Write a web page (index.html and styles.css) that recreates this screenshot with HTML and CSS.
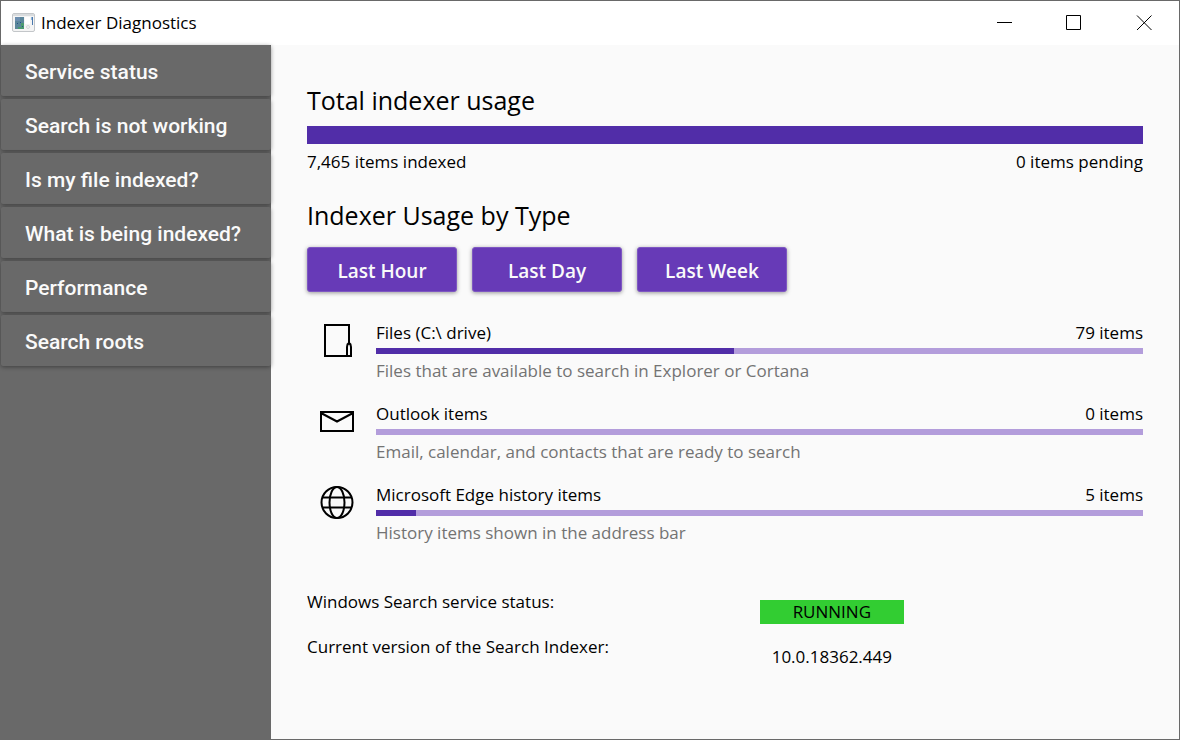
FILE: index.html
```html
<!DOCTYPE html>
<html lang="en">
<head>
    <meta charset="UTF-8">
    <meta name="viewport" content="width=device-width, initial-scale=1.0">
    <title>Indexer Diagnostics</title>
    <link rel="stylesheet" href="styles.css">
</head>
<body>
    <div class="window">
        <header class="title-bar">
            <svg class="app-icon" width="24" height="20" viewBox="0 0 24 20">
                <rect x="0.5" y="0.5" width="22" height="18" rx="1.5" fill="#f4f4f4" stroke="#c3c6c9"/>
                <rect x="1" y="1" width="21" height="2" fill="#d9dcde"/>
                <rect x="3" y="4" width="9" height="12" fill="#5b869b"/>
                <path d="M3 4h5v4H3z" fill="#6d8fb0"/>
                <path d="M9 10h3v6H6v-2h3z" fill="#4b9a70"/>
                <path d="M5 10h1v1H5zM8 9h1v1H8zM10 13h1v1h-1z" fill="#234f86"/>
                <rect x="13" y="4" width="5" height="7" fill="#fff"/>
                <path d="M19 4h2v3h-2z" fill="#8fb4d8"/>
                <path d="M20 4h1v8h-1z" fill="#4a78ad"/>
                <circle cx="16" cy="14" r="1.5" fill="none" stroke="#d6d8da"/>
            </svg>
            <h1>Indexer Diagnostics</h1>
            <div class="window-controls">
                <button type="button" aria-label="Minimize">
                    <svg width="16" height="16" viewBox="0 0 16 16"><path d="M1 7.5h15"/></svg>
                </button>
                <button type="button" aria-label="Maximize">
                    <svg width="16" height="16" viewBox="0 0 16 16"><path d="M0.5 0.5h14v14h-14z"/></svg>
                </button>
                <button type="button" aria-label="Close">
                    <svg width="16" height="16" viewBox="0 0 16 16"><path d="M1 0.5l14.5 14.500M15.500 0.500L1 15"/></svg>
                </button>
            </div>
        </header>

        <div class="layout">
            <nav class="sidebar">
                <button type="button">Service status</button>
                <button type="button">Search is not working</button>
                <button type="button">Is my file indexed?</button>
                <button type="button">What is being indexed?</button>
                <button type="button">Performance</button>
                <button type="button">Search roots</button>
            </nav>

            <main class="content">
                <section>
                    <h2>Total indexer usage</h2>
                    <progress class="total-bar" value="100" max="100" aria-label="Total indexer usage"></progress>
                    <div class="row">
                        <span>7,465 items indexed</span>
                        <span>0 items pending</span>
                    </div>
                </section>

                <section class="by-type">
                    <h2>Indexer Usage by Type</h2>
                    <div class="periods">
                        <button type="button">Last Hour</button>
                        <button type="button">Last Day</button>
                        <button type="button">Last Week</button>
                    </div>

                    <ul class="usage-list">
                        <li>
                            <svg width="36" height="36" viewBox="0 0 36 36">
                                <path d="M30 20V2H6v31h24"/>
                                <path d="M28 33v-9q0-3 2-4 2 1 2 4v9z"/>
                            </svg>
                            <div class="usage">
                                <div class="row">
                                    <span>Files (C:\ drive)</span>
                                    <span>79 items</span>
                                </div>
                                <progress value="46.7" max="100" aria-label="Files"></progress>
                                <p>Files that are available to search in Explorer or Cortana</p>
                            </div>
                        </li>
                        <li>
                            <svg width="36" height="36" viewBox="0 0 36 36">
                                <path d="M2 8h32v19H2zM2 9l16 8.500L34 9"/>
                            </svg>
                            <div class="usage">
                                <div class="row">
                                    <span>Outlook items</span>
                                    <span>0 items</span>
                                </div>
                                <progress value="0" max="100" aria-label="Outlook items"></progress>
                                <p>Email, calendar, and contacts that are ready to search</p>
                            </div>
                        </li>
                        <li>
                            <svg width="36" height="36" viewBox="0 0 36 36">
                                <circle cx="18" cy="17.500" r="15.500"/>
                                <ellipse cx="18" cy="17.500" rx="7.500" ry="15.500"/>
                                <path d="M3.500 12.500h29M3.500 22.500h29"/>
                            </svg>
                            <div class="usage">
                                <div class="row">
                                    <span>Microsoft Edge history items</span>
                                    <span>5 items</span>
                                </div>
                                <progress value="5.2" max="100" aria-label="Microsoft Edge history items"></progress>
                                <p>History items shown in the address bar</p>
                            </div>
                        </li>
                    </ul>
                </section>

                <dl class="service">
                    <dt>Windows Search service status:</dt>
                    <dd class="running">RUNNING</dd>
                    <dt>Current version of the Search Indexer:</dt>
                    <dd>10.0.18362.449</dd>
                </dl>
            </main>
        </div>
    </div>
</body>
</html>
```
FILE: styles.css
```css
* {
    margin: 0;
    padding: 0;
    box-sizing: border-box;
}

body {
    font-family: 'Segoe UI', 'Open Sans', sans-serif;
    font-size: 17px;
    line-height: 24px;
    color: #000;
    background: #fafafa;
}

button {
    border: none;
    font-family: inherit;
    cursor: pointer;
}

.window {
    display: flex;
    flex-direction: column;
    min-height: 100vh;
    border: 1px solid #696969;
}

.title-bar {
    display: flex;
    align-items: center;
    height: 44px;
    padding-left: 11px;
    background: #fff;
}

.title-bar h1 {
    margin-left: 5px;
    font-size: 17px;
    font-weight: 400;
}

.window-controls {
    display: flex;
    margin-left: auto;
}

.window-controls button {
    display: flex;
    align-items: center;
    justify-content: center;
    width: 70px;
    height: 44px;
    background: none;
}

.window-controls svg {
    fill: none;
    stroke: #000;
}

.layout {
    display: flex;
    flex: 1;
}

.sidebar {
    display: flex;
    flex-direction: column;
    gap: 3px;
    width: 270px;
    background: #696969;
}

.sidebar button {
    height: 51px;
    padding: 2px 24px 0;
    border-radius: 2px;
    background: #696969;
    box-shadow: 0 1px 4px rgba(0, 0, 0, 0.4);
    color: #fafafa;
    font-family: Roboto, sans-serif;
    font-size: 21px;
    font-weight: 500;
    text-align: left;
}

.content {
    flex: 1;
    padding: 37px 36px;
}

h2 {
    font-size: 25px;
    font-weight: 400;
    line-height: 36px;
}

.row {
    display: flex;
    justify-content: space-between;
}

progress {
    display: block;
    width: 100%;
    height: 6px;
    border: none;
    background: #b39ddb;
    appearance: none;
}

progress::-webkit-progress-bar {
    background: #b39ddb;
}

progress::-webkit-progress-value {
    background: #512da8;
}

.total-bar {
    height: 18px;
    margin: 8px 0 6px;
}

.by-type {
    margin-top: 23px;
}

.periods {
    display: flex;
    gap: 15px;
    margin-top: 14px;
}

.periods button {
    width: 150px;
    height: 45px;
    padding-top: 2px;
    border: 1px solid #7e57c2;
    border-radius: 3px;
    background: #673ab7;
    box-shadow: 0 1px 4px rgba(0, 0, 0, 0.4);
    color: #fafafa;
    font-size: 19px;
    font-weight: 600;
}

.usage-list {
    display: flex;
    flex-direction: column;
    gap: 19px;
    margin-top: 29px;
    list-style: none;
}

.usage-list li {
    display: flex;
    gap: 21px;
    padding-left: 12px;
}

.usage-list svg {
    flex: none;
    margin-top: 2px;
    fill: none;
    stroke: #000;
    stroke-width: 2;
}

.usage {
    flex: 1;
}

.usage progress {
    margin: 3px 0 5px;
}

.usage p {
    color: #737373;
}

.service {
    display: grid;
    grid-template-columns: 13fr 11fr;
    row-gap: 11px;
    margin-top: 45px;
}

.service dd {
    width: 144px;
    margin-top: 10px;
    text-align: center;
}

.service .running {
    background: #32cd32;
}
```
